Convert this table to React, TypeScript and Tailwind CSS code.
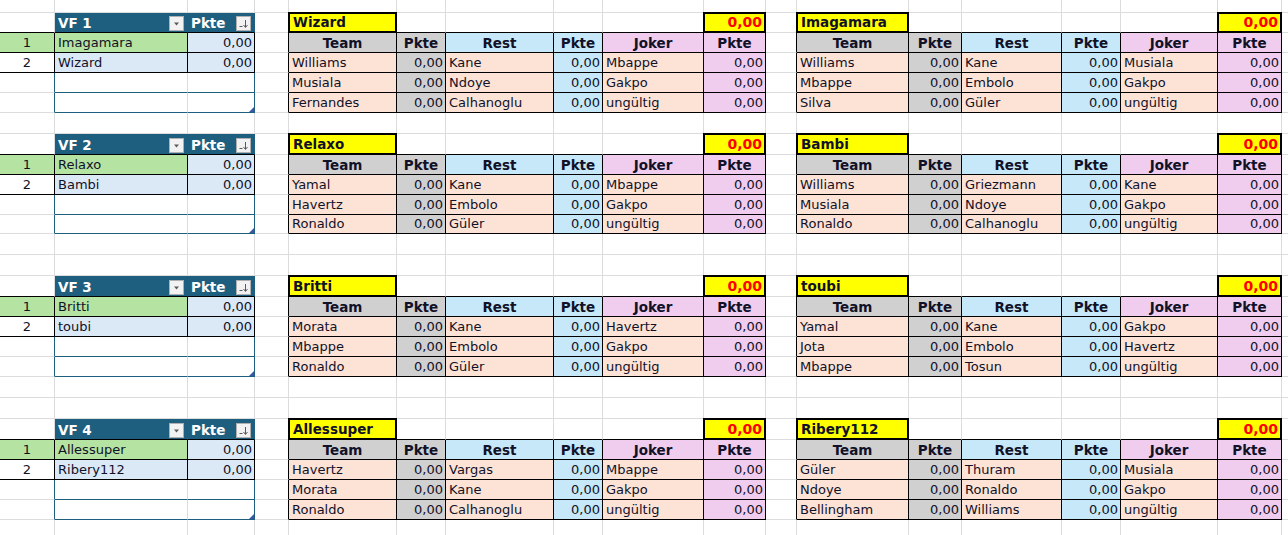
import React from "react";

type Cell = { content?: React.ReactNode; r: string; b: string; cls: string };

const R = { g: "border-r-[#dadcdd]", k: "border-r-black", u: "border-r-[#1e5f80]" };
const B = { g: "border-b-[#dadcdd]", k: "border-b-black", u: "border-b-[#1e5f80]" };

const head = "bg-[#1e5f80]";
const green = "bg-[#b5e3a1]";
const lblue = "bg-[#dbe9f7]";
const gray = "bg-[#d0d0d0]";
const sky = "bg-[#c6e8f8]";
const pink = "bg-[#f0cdee]";
const peach = "bg-[#fce3d6]";

const L = "justify-start pl-[3px]";
const RT = "justify-end pr-[2px]";
const CT = "justify-center";

const ROWS = 27;
const COLS = 18;

const vf = [
  { name: "VF 1", row: 1, players: ["Imagamara", "Wizard"] },
  { name: "VF 2", row: 7, players: ["Relaxo", "Bambi"] },
  { name: "VF 3", row: 14, players: ["Britti", "toubi"] },
  { name: "VF 4", row: 21, players: ["Allessuper", "Ribery112"] },
];

const tips = [
  { row: 1, col: 4, title: "Wizard", picks: [["Williams", "Kane", "Mbappe"], ["Musiala", "Ndoye", "Gakpo"], ["Fernandes", "Calhanoglu", "ungültig"]] },
  { row: 1, col: 11, title: "Imagamara", picks: [["Williams", "Kane", "Musiala"], ["Mbappe", "Embolo", "Gakpo"], ["Silva", "Güler", "ungültig"]] },
  { row: 7, col: 4, title: "Relaxo", picks: [["Yamal", "Kane", "Mbappe"], ["Havertz", "Embolo", "Gakpo"], ["Ronaldo", "Güler", "ungültig"]] },
  { row: 7, col: 11, title: "Bambi", picks: [["Williams", "Griezmann", "Kane"], ["Musiala", "Ndoye", "Gakpo"], ["Ronaldo", "Calhanoglu", "ungültig"]] },
  { row: 14, col: 4, title: "Britti", picks: [["Morata", "Kane", "Havertz"], ["Mbappe", "Embolo", "Gakpo"], ["Ronaldo", "Güler", "ungültig"]] },
  { row: 14, col: 11, title: "toubi", picks: [["Yamal", "Kane", "Gakpo"], ["Jota", "Embolo", "Havertz"], ["Mbappe", "Tosun", "ungültig"]] },
  { row: 21, col: 4, title: "Allessuper", picks: [["Havertz", "Vargas", "Mbappe"], ["Morata", "Kane", "Gakpo"], ["Ronaldo", "Calhanoglu", "ungültig"]] },
  { row: 21, col: 11, title: "Ribery112", picks: [["Güler", "Thuram", "Musiala"], ["Ndoye", "Ronaldo", "Gakpo"], ["Bellingham", "Williams", "ungültig"]] },
];

const FilterBtn = () => (
  <svg width="15" height="15" viewBox="0 0 15 15" className="shrink-0">
    <rect x="0.5" y="0.5" width="14" height="14" fill="#f2f2f2" stroke="#b0b0b0" />
    <path d="M5 6.5h5l-2.5 3z" fill="#5a5a5a" />
  </svg>
);

const SortBtn = () => (
  <svg width="15" height="15" viewBox="0 0 15 15" className="shrink-0">
    <rect x="0.5" y="0.5" width="14" height="14" fill="#f2f2f2" stroke="#b0b0b0" />
    <path d="M3.5 10.5h3" stroke="#5a5a5a" />
    <path d="M9.5 4v7" stroke="#5a5a5a" />
    <path d="M7.5 9l2 2.5 2-2.5" stroke="#5a5a5a" fill="none" />
  </svg>
);

const Boxed = ({ children, cls }: { children: React.ReactNode; cls: string }) => (
  <div className={`absolute -inset-px flex items-end pb-px border-2 border-black bg-[#ffff00] font-bold ${cls}`}>
    {children}
  </div>
);

function buildSheet() {
  const g: Cell[][] = Array.from({ length: ROWS }, () =>
    Array.from({ length: COLS }, () => ({ r: R.g, b: B.g, cls: "" }))
  );
  const box = (r: number, c: number) => {
    g[r][c].r = R.k;
    g[r][c].b = B.k;
    if (r > 0) g[r - 1][c].b = B.k;
    if (c > 0) g[r][c - 1].r = R.k;
  };

  vf.forEach(({ name, row, players }) => {
    // table header
    g[row][1] = { r: R.u, b: B.g, cls: `${head} justify-between pl-[3px] pr-[3px] text-white font-bold text-[13.5px]`, content: (<><span>{name}</span><FilterBtn /></>) };
    g[row][2] = { r: R.u, b: B.g, cls: `${head} justify-between pl-[3px] pr-[3px] text-white font-bold text-[13.5px]`, content: (<><span>Pkte</span><SortBtn /></>) };
    // empty rows with table border
    for (const rr of [row + 3, row + 4]) {
      g[rr][0].r = R.u;
      g[rr][1].b = B.u;
      g[rr][2].b = B.u;
      g[rr][2].r = R.u;
    }
    g[row + 4][2].cls = "justify-end";
    g[row + 4][2].content = (
      <svg width="5" height="5" viewBox="0 0 5 5" className="mb-[-1px]"><path d="M5 0v5H0z" fill="#3a56a8" /></svg>
    );
    players.forEach((p, i) => {
      const rr = row + 1 + i;
      g[rr][0].cls = `${CT} ${i === 0 ? green : ""}`;
      g[rr][0].content = i + 1;
      g[rr][1].cls = `${L} ${i === 0 ? green : lblue}`;
      g[rr][1].content = p;
      g[rr][2].cls = `${RT} ${lblue}`;
      g[rr][2].content = "0,00";
      box(rr, 0);
      box(rr, 1);
      box(rr, 2);
    });
  });

  tips.forEach(({ row, col, title, picks }) => {
    g[row][col].cls = "relative";
    g[row][col].content = <Boxed cls="pl-[3px] text-[13.5px]">{title}</Boxed>;
    g[row][col + 5].cls = "relative";
    g[row][col + 5].content = <Boxed cls="justify-end pr-[2px] text-[14px] text-[#ff0000]">0,00</Boxed>;
    const hdr = ["Team", "Pkte", "Rest", "Pkte", "Joker", "Pkte"];
    const hbg = [gray, gray, sky, sky, pink, pink];
    hdr.forEach((h, i) => {
      g[row + 1][col + i].cls = `${CT} ${hbg[i]} font-bold text-[13.5px]`;
      g[row + 1][col + i].content = h;
      box(row + 1, col + i);
    });
    const dbg = [peach, gray, peach, sky, peach, pink];
    picks.forEach((p, j) => {
      const rr = row + 2 + j;
      const vals = [p[0], "0,00", p[1], "0,00", p[2], "0,00"];
      vals.forEach((v, i) => {
        g[rr][col + i].cls = `${i % 2 === 0 ? L : RT} ${dbg[i]}`;
        g[rr][col + i].content = v;
        box(rr, col + i);
      });
    });
  });
  return g;
}

export default function App() {
  const sheet = buildSheet();
  return (
    <div className="w-[1288px] h-[535px] overflow-hidden bg-white font-['DejaVu_Sans',sans-serif] text-[13px] text-[#111128]">
      <div className="grid grid-cols-[55px_133px_67px_34px_108px_49px_108px_49px_101px_62px_31px_112px_53px_100px_59px_97px_64px_40px] grid-rows-[13px_20px_20px_20px_20px_20px_21px_21px_20px_20px_20px_19px_21px_21px_21px_20px_20px_20px_20px_21px_21px_21px_20px_20px_20px_20px_16px] w-[1328px]">
        {sheet.flatMap((row, ri) =>
          row.map((c, ci) => (
            <div
              key={`${ri}-${ci}`}
              className={`flex items-end pb-px leading-[16px] whitespace-nowrap border-r border-b ${c.r} ${c.b} ${c.cls}`}
            >
              {c.content}
            </div>
          ))
        )}
      </div>
    </div>
  );
}
